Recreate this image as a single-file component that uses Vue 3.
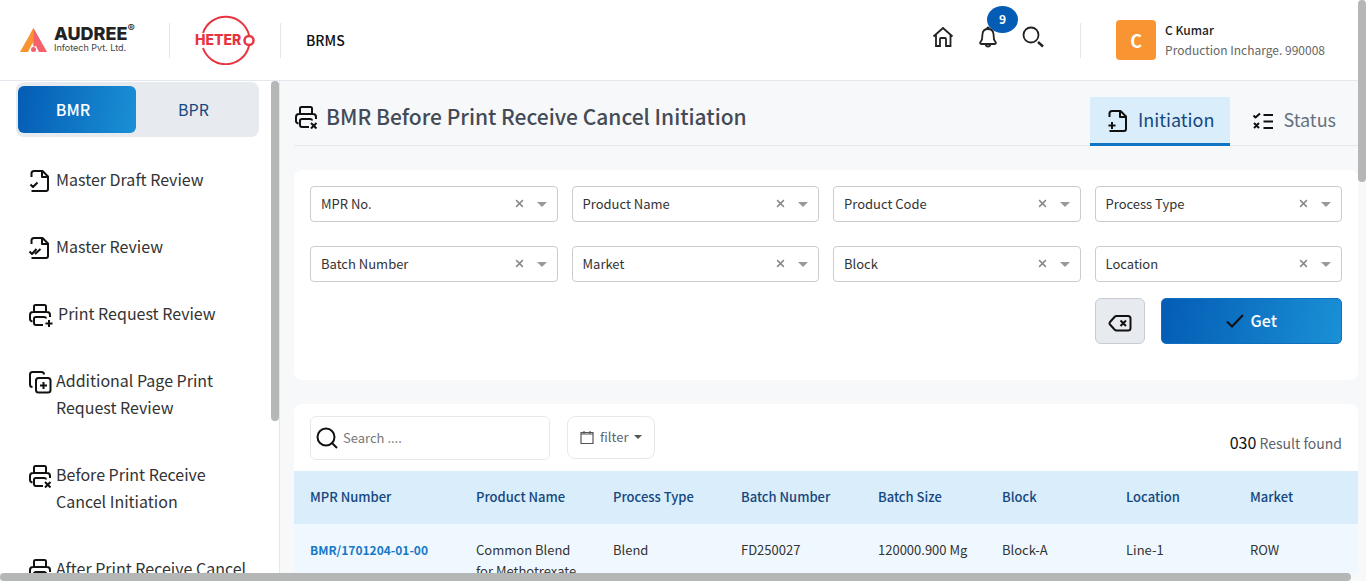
<script setup>
import { ref } from 'vue'

const filters = [
  'MPR No.', 'Product Name', 'Product Code', 'Process Type',
  'Batch Number', 'Market', 'Block', 'Location'
]

const nav = [
  { label: 'Master Draft Review', icon: 'draft' },
  { label: 'Master Review', icon: 'review' },
  { label: 'Print Request Review', icon: 'printAdd', wide: true },
  { label: 'Additional Page Print Request Review', icon: 'copyAdd' },
  { label: 'Before Print Receive Cancel Initiation', icon: 'printCancel' },
  { label: 'After Print Receive Cancel', icon: 'printCancel' }
]

const file = 'M3.500 8V4.500Q3.500 2 6 2H14.500L20 7.500V20Q20 22 18 22H3.500M14 2.500V8H19.500'
const printer = 'M6 9V3.500Q6 2 7.500 2H16.500Q18 2 18 3.500V9M4.500 18.500Q2 18 2 16V12Q2 9 5 9H19Q22 9 22 12V14M15 22H8Q6 22 6 20V15.500Q6 14 8 14H16Q18 14 18 15.500'
const icons = {
  draft: file + 'M2.500 15.500L5 18L9.500 13.500',
  review: file + 'M1.500 15.500L4 18L8.500 13M7 18L12.500 13',
  fileAdd: file + 'M6 13V20M2.500 16.500H9.500',
  printAdd: printer + 'M21 17V24M17.500 20.500H24.500',
  printCancel: printer + 'M17 18L22.500 23.500M22.500 18L17 23.500',
  copyAdd: 'M4.500 17Q2 17 2 14.500V4.500Q2 2 4.500 2H13.500Q16 2 16 4.500M10.500 8H20Q22.500 8 22.500 10.500V20Q22.500 22.500 20 22.500H10.500Q8 22.500 8 20V10.500Q8 8 10.500 8M15.500 12V19M12 15.500H19'
}

const columns = ['MPR Number', 'Product Name', 'Process Type', 'Batch Number', 'Batch Size', 'Block', 'Location', 'Market']
const rows = [
  ['BMR/1701204-01-00', 'Common Blend for Methotrexate', 'Blend', 'FD250027', '120000.900 Mg', 'Block-A', 'Line-1', 'ROW']
]
const search = ref('')
</script>

<template>
  <div class="app">
    <header class="header">
      <div class="audree">
        <svg class="mark" viewBox="0 0 27 24" aria-hidden="true">
          <path d="M13.500 0L0 24H8L13.500 13Z" fill="#f99432" />
          <path d="M13.500 0V13L19 24H27Z" fill="#f4606c" />
          <path d="M13.500 0L10 6.500L13.500 19Z" fill="#f99432" />
          <path d="M13.500 0V19L17 17Z" fill="#f4606c" />
          <circle cx="13.500" cy="21.500" r="2.500" fill="#f4606c" />
        </svg>
        <div class="audree-text">
          <div class="audree-name">AUDREE<sup>®</sup></div>
          <div class="audree-sub">Infotech Pvt. Ltd.</div>
        </div>
      </div>
      <span class="rule"></span>
      <svg class="hetero" viewBox="0 0 60 50" role="img" aria-label="Hetero">
        <path d="M8 18A24 24 0 0 1 54 20M54 31A24 24 0 0 1 8 33" fill="none" stroke="#e83440" stroke-width="2" />
        <text x="0" y="30" class="hetero-text">HETER</text>
        <circle cx="54" cy="25.500" r="4.500" fill="#fff" stroke="#e83440" stroke-width="2.500" />
      </svg>
      <span class="rule"></span>
      <strong class="brand">BRMS</strong>

      <div class="header-right">
        <button class="icon-btn" aria-label="Home">
          <svg viewBox="0 0 24 24"><path d="M2.500 11.500L12 3L21.500 11.500M5 10V21H9V14Q9 13 10 13H14Q15 13 15 14V21H19.500V10" /></svg>
        </button>
        <button class="icon-btn" aria-label="Notifications">
          <svg viewBox="0 0 24 24"><path d="M5 19Q3.500 18.500 4.500 17L6 14.500L6.500 9Q7 4 12 4Q17 4 17.500 9L18 14.500L19.500 17Q20.500 18.500 19 19ZM11 4Q11 2.500 12 2.500Q13 2.500 13 4M9.500 19.500Q10 21.500 12 21.500Q14 21.500 14.500 19.500" /></svg>
          <span class="badge">9</span>
        </button>
        <button class="icon-btn" aria-label="Search">
          <svg viewBox="0 0 24 24"><circle cx="10" cy="10" r="7.500" /><path d="M17 17L22 21.500" stroke-width="2.400" /></svg>
        </button>
        <span class="rule rule-user"></span>
        <div class="avatar">C</div>
        <div class="user">
          <strong>C Kumar</strong>
          <span>Production Incharge. 990008</span>
        </div>
      </div>
    </header>

    <div class="body">
      <aside class="sidebar">
        <div class="switch">
          <button class="on">BMR</button>
          <button>BPR</button>
        </div>
        <nav>
          <a v-for="n in nav" :key="n.label" href="#" class="nav-item">
            <svg class="ic" :class="{ wide: n.wide }" :viewBox="n.wide ? '0 0 26 24' : '0 0 24 24'" aria-hidden="true"><path :d="icons[n.icon]" /></svg>
            <span>{{ n.label }}</span>
          </a>
        </nav>
        <div class="thumb thumb-side" aria-hidden="true"></div>
      </aside>

      <main class="main">
        <div class="title-row">
          <svg class="ic" viewBox="0 0 24 24" aria-hidden="true"><path :d="icons.printCancel" /></svg>
          <h1>BMR Before Print Receive Cancel Initiation</h1>
          <div class="tabs">
            <button class="tab active">
              <svg class="ic" viewBox="0 0 24 24" aria-hidden="true"><path :d="icons.fileAdd" /></svg>
              <span>Initiation</span>
            </button>
            <button class="tab">
              <svg class="ic" viewBox="0 0 24 24" aria-hidden="true"><path d="M12.500 6H22M12.500 12.500H22M12.500 19H22M2.500 6.500L4.500 8.500L9 4.500M3 14L8 19M8 14L3 19" /></svg>
              <span>Status</span>
            </button>
          </div>
        </div>

        <section class="card filters">
          <div class="grid">
            <div v-for="f in filters" :key="f" class="field">
              <select :aria-label="f"><option>{{ f }}</option></select>
              <button class="clear" :aria-label="'Clear ' + f">
                <svg viewBox="0 0 8 8"><path d="M1 1L7 7M7 1L1 7" /></svg>
              </button>
              <svg class="caret" viewBox="0 0 10 5" aria-hidden="true"><path d="M0 0H10L5 5Z" /></svg>
            </div>
          </div>
          <div class="grid">
            <div class="actions">
              <button class="erase" aria-label="Clear filters">
                <svg class="ic" viewBox="0 0 24 24"><path d="M8.500 5H20Q22.500 5 22.500 7.500V17Q22.500 19.500 20 19.500H8.500Q7.500 19.500 6.500 18.500L2 13.500Q1 12.300 2 11L6.500 6Q7.500 5 8.500 5M12.500 9.500L18 15M18 9.500L12.500 15" /></svg>
              </button>
              <button class="get">
                <svg viewBox="0 0 18 14" aria-hidden="true"><path d="M1 7.500L6 12.500L17 1" /></svg>
                <span>Get</span>
              </button>
            </div>
          </div>
        </section>

        <section class="card results">
          <div class="toolbar">
            <label class="search">
              <svg viewBox="0 0 22 22" aria-hidden="true"><circle cx="10" cy="10" r="8.500" /><path d="M15.500 15.500L21 21" /></svg>
              <input v-model="search" type="text" placeholder="Search ...." aria-label="Search">
            </label>
            <button class="filter">
              <svg viewBox="0 0 14 14" aria-hidden="true"><path d="M1 2.500H13V13.500H1ZM1 4H13M4 1V3.500M10 1V3.500" /></svg>
              <span>filter</span>
              <i class="down"></i>
            </button>
            <p class="count"><b>030</b> Result found</p>
          </div>
          <table>
            <colgroup>
              <col class="c1"><col class="c2"><col class="c3"><col class="c2"><col><col><col><col>
            </colgroup>
            <thead>
              <tr><th v-for="c in columns" :key="c" scope="col">{{ c }}</th></tr>
            </thead>
            <tbody>
              <tr v-for="r in rows" :key="r[0]">
                <td v-for="(v, i) in r" :key="i"><a v-if="i === 0" href="#">{{ v }}</a><template v-else>{{ v }}</template></td>
              </tr>
            </tbody>
          </table>
        </section>
      </main>
    </div>

    <div class="thumb thumb-page" aria-hidden="true"></div>
    <div class="hbar" aria-hidden="true"><div class="hthumb"></div></div>
  </div>
</template>

<style>
body { overflow: hidden; }
</style>

<style scoped>
.app, .app * { box-sizing: border-box; }
.app {
  position: relative;
  display: flex;
  flex-direction: column;
  height: 100vh;
  overflow: hidden;
  background: #f7f8fa;
  color: #333;
  font: 13px/21px "Noto Sans CJK SC", "Noto Sans", sans-serif;
}
button, select, input { font: inherit; color: inherit; margin: 0; }
button { border: 0; background: none; padding: 0; cursor: pointer; }
a { text-decoration: none; }
svg { display: block; flex: none; fill: none; }
.ic { width: 24px; height: 24px; stroke: #111; stroke-width: 2; stroke-linejoin: round; }
.ic.wide { width: 26px; }

.header {
  flex: none;
  display: flex;
  align-items: center;
  height: 81px;
  padding: 0 41px 0 20px;
  background: #fff;
  border-bottom: 1px solid #e4e7ee;
}
.audree { display: flex; align-items: center; width: 118px; gap: 7px; }
.mark { width: 27px; height: 24px; }
.audree-text { font-family: Inter, sans-serif; color: #222; white-space: nowrap; }
.audree-name { font-size: 18px; line-height: 16px; font-weight: 800; }
.audree-name sup { font-size: 11px; line-height: 0; font-weight: 600; vertical-align: 8px; }
.audree-sub { font-size: 9px; line-height: 12px; color: #444; }
.rule { width: 1px; height: 35px; background: #e4e7ec; margin: 0 25px 0 31px; }
.hetero { width: 60px; height: 50px; }
.hetero + .rule { margin-left: 25px; }
.hetero-text { font: 800 14px Inter, sans-serif; fill: #e83440; }
.brand { font-size: 14px; font-weight: 500; color: #111; }
.header-right { display: flex; align-items: center; margin-left: auto; }
.icon-btn { position: relative; margin-right: 21px; margin-top: -6px; }
.icon-btn svg { width: 24px; height: 24px; stroke: #222; stroke-width: 1.800; }
.badge {
  position: absolute;
  left: 11px;
  top: -19px;
  width: 31px;
  height: 27px;
  border-radius: 50%;
  background: #045cb4;
  color: #fff;
  font-size: 12px;
  line-height: 25px;
  font-weight: 700;
}
.rule-user { margin: 0 35px 0 14px; }
.avatar {
  width: 40px;
  height: 40px;
  border-radius: 4px;
  background: #f99432;
  color: #fff;
  font-size: 18px;
  line-height: 41px;
  font-weight: 700;
  text-align: center;
}
.user { display: flex; flex-direction: column; margin-left: 9px; padding-bottom: 1px; font-size: 12px; line-height: 20px; color: #666; white-space: nowrap; }
.user strong { font-weight: 500; color: #222; }

.body { flex: 1; display: flex; min-height: 0; }
.sidebar { position: relative; flex: none; width: 280px; padding: 1px 20px 0 16px; background: #fff; border-right: 1px solid #e4e7ee; overflow: hidden; }
.switch { display: grid; grid-template-columns: 118px 1fr; padding: 4px 8px 4px 2px; border-radius: 8px; background: #e7eaef; }
.switch button { height: 47px; border-radius: 6px; font-size: 16px; color: #15487f; }
.switch .on { padding-right: 8px; background: linear-gradient(100deg, #045cb4, #1a90d6); color: #fff; font-weight: 500; }
nav { padding-top: 9px; }
.nav-item { display: flex; gap: 4px; padding: 20px 0 20px 12px; font-size: 16px; line-height: 27px; color: #333; }
.nav-item .ic { margin-top: 3px; }

.main { flex: 1; min-width: 0; padding: 16px 8px 0 14px; overflow: hidden; }
.title-row { display: flex; align-items: center; height: 49px; border-bottom: 1px solid #e4e7ec; }
h1 { margin: 0 0 0 8px; padding-bottom: 10px; font-size: 21px; line-height: 30px; font-weight: 500; color: #444b57; white-space: nowrap; }
.title-row > .ic { margin-bottom: 8px; }
.tabs { display: flex; align-self: stretch; height: 49px; margin-left: auto; }
.tab { display: flex; align-items: center; gap: 8px; padding: 0 22px 0 21px; border-bottom: 3px solid transparent; font-size: 18px; color: #667080; }
.tab span { padding-bottom: 2px; }
.tab .ic { margin-top: 2px; }
.tab.active { padding: 0 16px; background: #daedfa; border-color: #1074c4; color: #15487f; }

.card { background: #fff; border-radius: 8px; }
.filters { height: 210px; margin-top: 24px; padding: 16px; }
.grid { display: grid; grid-template-columns: repeat(4, 1fr); gap: 24px 14px; }
.grid + .grid { margin-top: 16px; }
.field { position: relative; }
select { display: block; width: 100%; height: 36px; padding: 0 56px 2px 10px; appearance: none; border: 1px solid #ccc; border-radius: 4px; background: #fff; color: #333; }
.clear { position: absolute; right: 34px; top: 13px; }
.clear svg { width: 9px; height: 9px; stroke: #888; stroke-width: 1.300; }
.caret { position: absolute; right: 11px; top: 16px; width: 10px; height: 5px; fill: #999; pointer-events: none; }
.actions { grid-column: 4; display: flex; gap: 16px; }
.erase { flex: none; width: 50px; height: 46px; padding-top: 3px; display: flex; align-items: center; justify-content: center; border: 1px solid #c8ccd2; border-radius: 6px; background: #e7eaef; }
.get { flex: 1; display: flex; align-items: center; justify-content: center; gap: 7px; border: 1px solid #0f70bf; border-radius: 5px; background: linear-gradient(100deg, #045cb4, #1a90d6); color: #fff; font-size: 16px; font-weight: 500; }
.get span { padding-bottom: 2px; }
.get svg { width: 18px; height: 14px; stroke: #111; stroke-width: 2; }

.results { margin-top: 24px; overflow: hidden; }
.toolbar { display: flex; align-items: flex-start; padding: 12px 16px 11px; }
.search { display: flex; align-items: center; width: 240px; height: 44px; padding-left: 5px; border: 1px solid #e7e8ee; border-radius: 6px; }
.search svg { width: 22px; height: 22px; stroke: #111; stroke-width: 2; }
.search input { flex: 1; min-width: 0; padding: 0 0 2px 5px; border: 0; outline: 0; background: none; }
.search input::placeholder { color: #777; opacity: 1; }
.filter { display: flex; align-items: center; height: 43px; margin-left: 17px; padding: 0 12px 2px; gap: 6px; border: 1px solid #e7e8ee; border-radius: 8px; color: #5c636e; }
.filter svg { width: 14px; height: 14px; stroke: #555; stroke-width: 1.200; }
.down { border: 4px solid transparent; border-top-color: #555; border-bottom: 0; }
.count { margin: 16px 0 0 auto; font-size: 14px; color: #5c636e; }
.count b { font-size: 16px; font-weight: 400; color: #111; }
table { width: 100%; table-layout: fixed; border-collapse: collapse; }
.c1 { width: 166px; }
.c2 { width: 137px; }
.c3 { width: 128px; }
th, td { padding: 15px 16px 17px; text-align: left; vertical-align: top; }
th { background: #daedfa; color: #15487f; font-weight: 500; }
td { background: #f0f8ff; }
td a { color: #1878c8; font-size: 12px; font-weight: 700; }

.thumb { position: absolute; width: 8px; border-radius: 4px; background: #b5b7b6; }
.thumb-side { right: 0; top: 0; height: 340px; }
.thumb-page { right: 0; top: 0; height: 182px; }
.hbar { position: absolute; left: 0; right: 0; bottom: 0; height: 8px; padding-right: 15px; background: #f7f8fa; }
.hthumb { height: 8px; border-radius: 4px; background: #b5b7b6; }
</style>
